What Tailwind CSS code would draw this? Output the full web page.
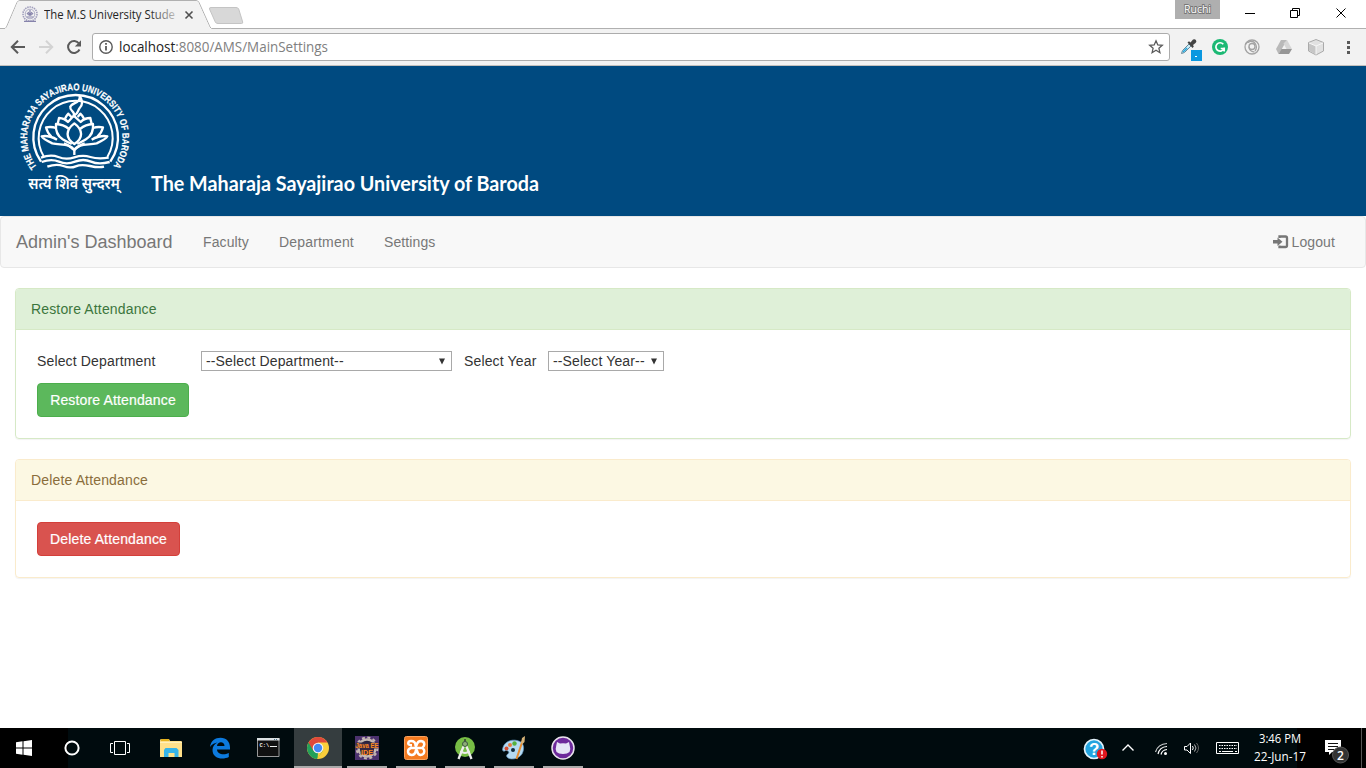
<!DOCTYPE html>
<html lang="en">
<head>
<meta charset="utf-8">
<title>The M.S University Student Attendance</title>
<script src="https://cdn.jsdelivr.net/npm/@tailwindcss/browser@4"></script>
</head>
<body class="w-[1366px] h-[768px] overflow-hidden flex flex-col bg-white font-['Liberation_Sans',sans-serif] text-sm leading-5 text-[#333]">

<!-- Tab strip -->
<div class="relative h-[29px] shrink-0 bg-white flex">
  <svg class="absolute inset-0" width="1366" height="29" viewBox="0 0 1366 29" fill="none">
    <path d="M0 28.5H5L6.5 27 17 2.5Q18 .5 20 .5H196Q198 .5 199 2.5L210 27 211.5 28.5H1366" stroke="#b0b0b0"/>
    <path d="M5.5 29L7 27.3 17.5 2.5Q18.5 1 20 1H196Q197.500 1 198.500 3L209.500 27.300 211 29Z" fill="#f2f2f2"/>
    <path d="M211 7.500H236Q238 7.500 238.700 9L242.700 22Q243 23.500 241.500 23.500H218Q216 23.500 215.300 22L209.500 9Q209 7.500 211 7.500Z" fill="#d8d8d8" stroke="#c4c4c4"/>
    <g stroke="#a09ebc"><circle cx="30" cy="14" r="7" stroke-width="1.600" stroke-dasharray="1.500 .8"/><circle cx="30" cy="14" r="4.800" stroke-width=".8"/><path d="M27 13q3 5 6 0M30 10v6M28 12l2 3 2-3M26.500 17h7M24 21.300h12" stroke="#8683ab" stroke-width="1.200"/></g>
    <path d="M185.500 11.500l7 7M192.500 11.500l-7 7" stroke="#505050" stroke-width="1.600"/>
    <path d="M1245 13.500h10" stroke="#000"/>
    <path d="M1290.500 10.500h7v7h-7zM1292.500 10.500v-2h7v7h-2M1336.500 8.500l9 9M1345.500 8.500l-9 9" stroke="#000"/>
  </svg>
  <div class="relative ml-11 mt-[6px] w-[131px] h-[18px]">
    <svg width="140" height="18"><defs><linearGradient id="fade"><stop offset=".8" stop-color="#222"/><stop offset="1" stop-color="#222" stop-opacity=".25"/></linearGradient></defs><text x="0" y="13" textLength="131" lengthAdjust="spacingAndGlyphs" font-family="Open Sans" font-size="12" fill="url(#fade)">The M.S University Stude</text></svg>
  </div>
  <div class="relative ml-[1000px] w-[45px] h-[19px] bg-[#afafaf] flex justify-center">
    <svg width="45" height="19"><text x="9" y="13" textLength="27" lengthAdjust="spacingAndGlyphs" font-family="Open Sans" font-size="11" fill="#fff" stroke="#777" stroke-width="1.800" paint-order="stroke">Ruchi</text></svg>
  </div>
</div>

<!-- Toolbar -->
<div class="h-[37px] shrink-0 bg-[#f2f2f2] border-b border-[#c3c0bd] flex items-start">
  <svg class="shrink-0" width="92" height="36" viewBox="0 29 92 36" fill="none" stroke-width="2">
    <path d="M25 47H12.500M18 40.800L11.800 47 18 53.200" stroke="#5a5a5a"/>
    <path d="M39 47H51.500M46 40.800L52.200 47 46 53.200" stroke="#d3d3d3"/>
    <path d="M79 43.500A6 6 0 1 0 79.500 49.500" stroke="#5a5a5a"/><path d="M81 40.300v6.200h-6.200z" fill="#5a5a5a"/>
  </svg>
  <div class="mt-1 w-[1078px] h-7 bg-white border border-[#acacac] rounded-[3px] flex items-center">
    <svg width="26" height="26" viewBox="93 34 26 26" fill="none" stroke="#5a5a5a"><circle cx="106" cy="47" r="6.200" stroke-width="1.400"/><path d="M106 46v4.500M106 43v1.800" stroke-width="1.800"/></svg>
    <svg width="215" height="26"><text x="0" y="18" textLength="209" lengthAdjust="spacingAndGlyphs" font-family="Open Sans" font-size="14" fill="#808080"><tspan fill="#222">localhost</tspan>:8080/AMS/MainSettings</text></svg>
    <svg class="ml-auto" width="26" height="26" viewBox="1143 34 26 26" fill="none"><path d="M1156 40.800l1.800 4.100 4.500.400-3.400 3 1 4.400-3.900-2.400-3.900 2.400 1-4.400-3.400-3 4.500-.400z" stroke="#5a5a5a" stroke-width="1.300"/></svg>
  </div>
  <svg class="shrink-0" width="196" height="36" viewBox="1170 29 196 36" fill="none">
    <path d="M1181.500 53.500l1-3 6.500-6.500 2 2-6.500 6.500z" fill="#c9edf8" stroke="#69899a"/><path d="M1183 52l4-4" stroke="#27a7dc" stroke-width="1.600"/>
    <path d="M1187.500 42.500l1.500-1.200 1.500 1.200 2.500-3q2-1 3 .700t-.500 2.800l-2.500 2 .8 1.500-1.300 1.600z" fill="#444"/>
    <rect x="1191" y="50" width="11" height="11" fill="#0b98e0"/><path d="M1195 56.500h2" stroke="#fff"/>
    <circle cx="1220" cy="47" r="8" fill="#1cb974"/><path d="M1223.300 44.200A4.200 4.200 0 1 0 1224 48.500H1220.700M1224.200 47.500v4" stroke="#fff" stroke-width="1.700"/>
    <g stroke="#a3a3a3" stroke-width="1.300"><circle cx="1252" cy="47" r="7"/><circle cx="1252" cy="46.500" r="3"/><path d="M1248.500 41.500q5-1 7 2.500t-.500 7M1249 46.500q0 5 5.500 5.500M1245.500 45q0-3 4-3"/></g>
    <path d="M1281 40h6l-5.500 9.500-3 4.500-2.500-5z" fill="#b9b9b9"/><path d="M1287 40l5 9h-5.500l-3-5.500z" fill="#d5d5d5"/><path d="M1281.500 49h10.500l-3 5h-10.500z" fill="#969696"/>
    <path d="M1316 39.500l7.500 3v8.500l-7.500 4-7.500-4v-8.500z" fill="#e1e1e1" stroke="#aaa"/><path d="M1309 43l7 3v8.500l-7-4z" fill="#c6c6c6"/><path d="M1309 43l7 3 7-3M1316 46v8.500" stroke="#f7f7f7"/>
    <path d="M1347 41h3v3h-3zM1347 46h3v3h-3zM1347 51h3v3h-3z" fill="#5a5a5a"/>
  </svg>
</div>

<!-- University banner -->
<header class="h-[150px] shrink-0 bg-[#004a80] flex">
  <svg class="ml-2.5 mt-[9px] shrink-0" width="140" height="130" viewBox="0 0 420 390" fill="none" stroke="#fff">
    <path id="ring" d="M81 276A143 143 0 1 1 304 281" stroke="none"/>
    <text stroke="#fff" stroke-width=".6" fill="#fff" font-family="Liberation Sans Narrow, Liberation Sans" font-weight="700" font-size="29"><textPath href="#ring" textLength="632" lengthAdjust="spacingAndGlyphs">THE MAHARAJA SAYAJIRAO UNIVERSITY OF BARODA</textPath></text>
    <path d="M93 260A127 127 0 1 1 301 260" stroke-width="7"/>
    <path d="M102 246A111 111 0 1 1 292 246" stroke-width="6"/>
    <g stroke-width="7" stroke-linejoin="round">
      <path d="M93 248Q122 237 145 246T193 247T241 246T296 248M95 261Q124 250 147 260T195 260T243 260T299 261M112 275Q139 265 160 273T197 274T240 273T282 275"/>
      <path d="M193 240V225C182 205 150 211 127 205 111 198 98 190 95 184 112 180 132 188 141 194M193 225C204 205 237 211 260 205 276 198 289 190 292 184 275 180 254 188 245 194"/>
      <path d="M193 225C181 217 175 208 162 205M193 225C204 217 211 208 224 205" />
      <path d="M193 145C166 165 166 190 193 207 220 190 220 165 193 145Z"/>
      <path d="M177 162Q160 148 138 147 135 178 158 193 173 202 185 207M210 162Q227 148 249 147 252 178 228 193 213 202 202 207"/>
      <path d="M138 159Q125 154 108 157 112 174 124 185M249 159Q262 154 279 157 275 174 262 185M143 147L147 129Q164 130 174 141L191 122 212 141Q223 129 241 129L245 148M165 131Q170 121 175 116L184 126M222 131Q217 121 211 116L203 126"/>
      <path d="M192 122C194 105 179 110 181 96 182 83 214 86 209 62 217 76 221 88 209 99 202 107 207 114 192 122Z"/>
    </g>
    <text x="55" y="343" textLength="274" lengthAdjust="spacingAndGlyphs" font-family="Noto Sans Devanagari, Noto Sans, sans-serif" font-weight="600" font-size="48" fill="#fff" stroke="none">सत्यं शिवं सुन्दरम्</text>
  </svg>
  <svg class="mt-[100px] shrink-0 overflow-visible" width="420" height="44"><text x="1" y="25" textLength="388" lengthAdjust="spacingAndGlyphs" font-family="Lato" font-weight="700" font-size="21" fill="#fff">The Maharaja Sayajirao University of Baroda</text></svg>
</header>

<!-- Navigation -->
<nav class="h-[52px] shrink-0 bg-[#f8f8f8] border border-[#e7e7e7] rounded flex items-center text-[#777] pl-[15px] pr-[30px] tracking-[0.1px]">
  <span class="text-lg leading-5 w-[187px] tracking-normal">Admin's Dashboard</span>
  <span class="w-[76px]">Faculty</span>
  <span class="w-[105px] tracking-[0.18px]">Department</span>
  <span>Settings</span>
  <span class="ml-auto flex items-center gap-[3px]">
    <svg class="-ml-px" width="16" height="14" viewBox="0 0 16 14" fill="none"><path d="M6.500 3V1.500h6q1.500 0 1.500 1.500v7.500q0 1.500-1.500 1.500h-6V10.500" stroke="#777" stroke-width="2.300"/><path d="M0 5h4.500V2.500l5 4.300-5 4.200V8.500H0z" fill="#777"/></svg>
    Logout
  </span>
</nav>

<!-- Page content -->
<main class="flex-1 px-[15px] pt-5 flex flex-col gap-5 tracking-[0.15px]">
  <section class="h-[151px] border border-[#d6e9c6] rounded shadow-[0_1px_1px_rgba(0,0,0,0.05)]">
    <h2 class="h-[41px] px-[15px] py-2.5 bg-[#dff0d8] border-b border-[#d6e9c6] text-[#3c763d] rounded-t-[3px]">Restore Attendance</h2>
    <div class="pl-[21px] pt-[21px]">
      <div class="flex h-5 items-center">
        <span class="w-[164px]">Select Department</span>
        <div class="w-[251px] h-5 border border-[#a9a9a9] flex items-center justify-between pl-1 pr-1.5"><span>--Select Department--</span><svg width="6" height="7"><path d="M0 .5h6L3 6.500z" fill="#333"/></svg></div>
        <span class="ml-3 w-[84px]">Select Year</span>
        <div class="w-[116px] h-5 border border-[#a9a9a9] flex items-center justify-between pl-1 pr-1.5"><span>--Select Year--</span><svg width="6" height="7"><path d="M0 .5h6L3 6.500z" fill="#333"/></svg></div>
      </div>
      <button class="mt-3 block w-[152px] h-[34px] rounded bg-[#5cb85c] border border-[#4cae4c] text-white [-webkit-text-stroke:0.2px_white]">Restore Attendance</button>
    </div>
  </section>
  <section class="h-[119px] border border-[#faebcc] rounded shadow-[0_1px_1px_rgba(0,0,0,0.05)]">
    <h2 class="h-[41px] px-[15px] py-2.5 bg-[#fcf8e3] border-b border-[#faebcc] text-[#8a6d3b] rounded-t-[3px]">Delete Attendance</h2>
    <div class="pl-[21px] pt-[21px]">
      <button class="block w-[143px] h-[34px] rounded bg-[#d9534f] border border-[#d43f3a] text-white [-webkit-text-stroke:0.2px_white]">Delete Attendance</button>
    </div>
  </section>
</main>

<!-- Taskbar -->
<footer class="h-10 shrink-0 bg-[#000b0e] flex">
  <svg class="shrink-0" width="147" height="40" viewBox="0 0 147 40" fill="none" stroke="#fff"><path d="M0 0h68v40H0z" fill="#000" stroke="none"/><path d="M16 14.300l6.500-1V19.500H16zM23.500 13.200l8.500-1.200v7.500h-8.500zM16 20.500h6.500v6.200l-6.500-1zM23.500 20.500H32V28l-8.500-1.200z" fill="#fff" stroke="none"/><circle cx="72" cy="20" r="6.600" stroke-width="2"/><path d="M114.500 13.500h11v13h-11zM113 15.500h-2.500v9h2.500M127 15.500h2.500v9H127"/></svg>
  <svg class="shrink-0" width="49" height="40" viewBox="147 0 49 40"><path d="M160 13q0-2 1-2h8l1 2h11q1 0 1 1v15h-22z" fill="#ffe08a"/><path d="M161 11h8v2h-8z" fill="#e5b31f"/><path d="M160 14h22v1h-22z" fill="#fff0bb"/><path d="M164 29v-7l1.500-2h11l2 2v7h-4v-4h-6v4z" fill="#36b3e8"/></svg>
  <svg class="shrink-0" width="49" height="40" viewBox="196 0 49 40"><path d="M210 19C211 12.500 215 9.800 220.500 9.800C226.500 9.800 230 14 230 19.500V21.500H217C217 25.500 223 28 228.800 25V29C223 32 212.500 31 212.500 22C212.500 18.500 214.500 16 217.500 14.500C215 15 212 16 210 19ZM217 18H224.500C224.500 13 217.500 13 217 18Z" fill="#0c7ade" fill-rule="evenodd"/></svg>
  <svg class="shrink-0" width="49" height="40" viewBox="245 0 49 40"><path d="M257.500 10.500h21.500v18h-21.500z" fill="#111" stroke="#999"/><path d="M257 10h22.500v2.500h-22.500z" fill="#dce1e3"/><path d="M274 11.500h1M276 11.500h1" stroke="#47728d"/><text x="259.500" y="19" font-family="Liberation Mono" font-size="5.500" font-weight="700" fill="#eee">C:\</text><path d="M270 18.500h7" stroke="#eee"/></svg>
  <div class="w-12 bg-[#353d3f] border-b-2 border-[#aaa] shrink-0"><svg width="48" height="38" viewBox="294 0 48 38"><circle cx="318" cy="20" r="11" fill="#fbcf3b"/><path d="M308.500 14.500A11 11 0 0 1 327.500 14.500H318L313 22.900z" fill="#df493b"/><path d="M308.500 14.500A11 11 0 0 0 317 31l5.800-8.200L318 20h-5z" fill="#23a05a"/><path d="M308.500 14.500L313.500 23 318 20V14.500z" fill="#df493b"/><path d="M318 25L323 22 317.500 31z" fill="#fbcf3b"/><circle cx="318" cy="20" r="5.300" fill="#f4f4f4"/><circle cx="318" cy="20" r="4.200" fill="#4489f5"/></svg></div>
  <div class="ml-[5px] w-10 border-b-2 border-[#aaa] shrink-0"><svg width="40" height="38" viewBox="347 0 40 38"><path d="M355 8h24v24h-24z" fill="#4c326e"/><circle cx="367" cy="20" r="8.500" fill="#25203d" stroke="#c4b7b2" stroke-width="2.500"/><circle cx="367" cy="20" r="10.500" fill="none" stroke="#c4b7b2" stroke-width="2" stroke-dasharray="3 2.500"/><path d="M355.500 14.500h23v6h-5v6h-13v-6h-5z" fill="#3a2a45" fill-opacity=".85"/><text x="355.500" y="20" textLength="23" lengthAdjust="spacingAndGlyphs" font-family="Liberation Sans" font-weight="700" font-size="7" fill="#ff8a1d">Java EE</text><text x="361" y="26.500" textLength="12" lengthAdjust="spacingAndGlyphs" font-family="Liberation Sans" font-weight="700" font-size="7" fill="#ff8a1d">IDE</text></svg></div>
  <div class="ml-[9px] w-10 border-b-2 border-[#aaa] shrink-0"><svg width="40" height="38" viewBox="396 0 40 38" fill="none"><rect x="404.500" y="8.500" width="23" height="23" rx="2" fill="#f57b20" stroke="#f9a25d"/><path d="M412 17.200H410.500Q408.200 16.500 408.200 15.200 408.500 13 411 13 415.500 13 415.500 17.500H416.500Q417.500 13 421 13 424.300 13.300 424.300 16.500 424 19 422 20 424.300 21 424.300 23.500 424 26.800 420.500 27 417.500 26.500 417 22.500H415.800Q415.300 27 411.500 27 408 26.500 408 23.500 408 21 411 20H421.500" stroke="#fff" stroke-width="2.400" stroke-linejoin="round"/></svg></div>
  <div class="ml-[9px] w-10 border-b-2 border-[#aaa] shrink-0"><svg width="40" height="38" viewBox="445 0 40 38" fill="none"><circle cx="465" cy="19" r="10" fill="#77bd45"/><path d="M465 11v5" stroke="#435d37" stroke-width="2"/><circle cx="465" cy="16" r="2.500" fill="#8daf77" stroke="#3e5445"/><path d="M463.500 18.500L458.500 31M466.500 18.500L471.500 31" stroke="#eee" stroke-width="2.300"/><path d="M460.500 23Q465 27 469.500 23" stroke="#eee" stroke-width="1.800"/></svg></div>
  <div class="ml-[9px] w-10 border-b-2 border-[#aaa] shrink-0"><svg width="40" height="38" viewBox="494 0 40 38" fill="none"><path d="M502.500 22C503 14 511 11 517 12.500C524 14 525 20 522 26C518 32 509 32 507 29C505 26 511 26 508 23C505 21 504 25 502.500 22Z" fill="#b5daf2" stroke="#6095bf" stroke-width=".7"/><circle cx="506.500" cy="20.500" r="2" fill="#d84e31"/><circle cx="510" cy="17" r="2" fill="#e57b40"/><circle cx="514.500" cy="15.500" r="2.200" fill="#55b13d"/><circle cx="513" cy="22" r="2" fill="#102a3b"/><path d="M522.500 13L516.500 31" stroke="#e58d32" stroke-width="2"/><path d="M521 15l1-5 3-2-.5 6-2 2z" fill="#d6b378"/></svg></div>
  <div class="ml-[9px] w-10 border-b-2 border-[#aaa] shrink-0"><svg width="40" height="38" viewBox="543 0 40 38" fill="none"><circle cx="563" cy="20" r="11" fill="#6d299b" stroke="#e9e4ed" stroke-width="1.500"/><path d="M557 14l3 1.500q3-.5 6 0l3-1.500.8 4q1.200 3-.3 6-2 2-6.500 2t-6.500-2q-1.500-3-.3-6z" fill="#e6e5f6"/></svg></div>
  <svg class="ml-auto shrink-0" width="168" height="40" viewBox="1083 0 168 40" fill="none">
    <circle cx="1094" cy="21" r="9.500" fill="#23a4df" stroke="#e3f3fb" stroke-width="1.700"/><text x="1089" y="27" font-family="Liberation Sans" font-size="17" font-weight="700" fill="#fff">?</text><circle cx="1102" cy="26" r="5.200" fill="#e3171e"/><path d="M1102 22.500v4M1102 28v1.500" stroke="#fff" stroke-width="1.500"/>
    <path d="M1122.500 22.500L1128 17l5.500 5.500" stroke="#fff" stroke-width="1.400"/>
    <g stroke="#c6cacb" stroke-width="1.200"><path d="M1155.500 24Q1158 16 1167 15.500"/><path d="M1158 26Q1159.500 19 1167 18.500" stroke="#fff"/><path d="M1161 26.500Q1162 22 1167 21.500" stroke="#fff"/></g><circle cx="1165.500" cy="25.500" r="1.500" fill="#fff"/>
    <path d="M1184.500 18.500h2.500l3.500-3.500v10.500l-3.500-3.500h-2.500z" stroke="#fff"/><path d="M1192.500 18q1.500 2 0 4" stroke="#fff"/><path d="M1194.500 16.500q3 3.500 0 7" stroke="#bbb"/><path d="M1196.500 15q4 5 0 10" stroke="#666"/>
    <path d="M1216.500 14.500h22v11h-22z" stroke="#fff"/><path d="M1219 17.500h18M1219 20.500h18" stroke="#fff" stroke-dasharray="1.500 1"/><path d="M1219 23.500h2M1222 23.500h11M1235 23.500h2" stroke="#fff"/>
  </svg>
  <svg class="shrink-0" width="115" height="40" viewBox="1251 0 115 40" fill="none">
    <path d="M1297 0h69v40h-69z" fill="#000"/><path d="M1361.500 0v40" stroke="#555"/>
    <g font-family="Open Sans" font-size="12" fill="#fff"><text x="1259" y="15" textLength="42" lengthAdjust="spacingAndGlyphs">3:46 PM</text><text x="1254" y="33" textLength="52" lengthAdjust="spacingAndGlyphs">22-Jun-17</text></g>
    <path d="M1325 12h16v12h-9l-3 3v-3h-4z" fill="#fff"/><path d="M1328 15.500h10M1328 18.500h10M1328 21.500h6" stroke="#111"/>
    <circle cx="1340.500" cy="27" r="8" fill="#333" stroke="#555"/><text x="1337" y="31.500" font-family="Open Sans" font-size="12" font-weight="600" fill="#fff">2</text>
  </svg>
</footer>
</body>
</html>
